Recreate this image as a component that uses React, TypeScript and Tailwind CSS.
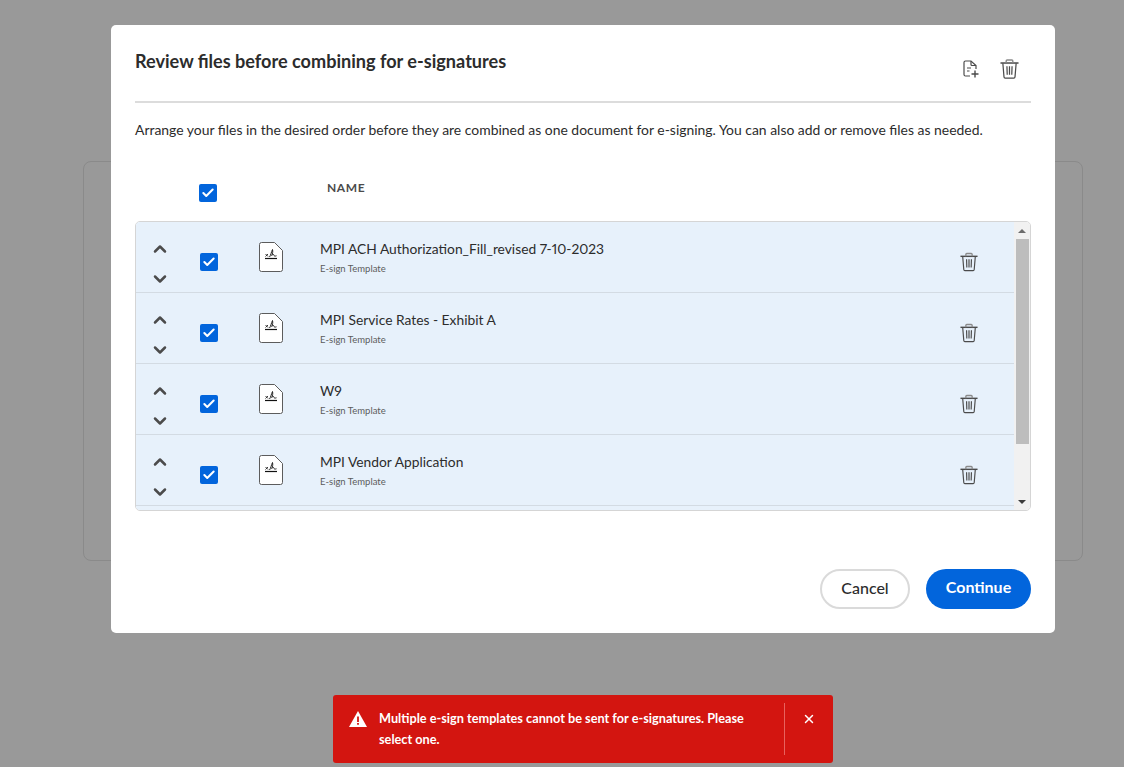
import { ChevronUp, ChevronDown, Check, X } from "lucide-react";

const files = [
  "MPI ACH Authorization_Fill_revised 7-10-2023",
  "MPI Service Rates - Exhibit A",
  "W9",
  "MPI Vendor Application",
];

function CheckBox() {
  return (
    <div className="w-[18px] h-[18px] rounded-[2px] bg-[#0265dc] flex items-center justify-center">
      <Check className="w-[14px] h-[14px] text-white" strokeWidth={3.5} />
    </div>
  );
}

function TrashIcon({ className }: { className?: string }) {
  return (
    <svg viewBox="0 0 20 21" fill="none" stroke="#4b4b4b" strokeWidth="1.3" className={className}>
      <path d="M.5 4.200h19" strokeWidth="1.600" />
      <path d="M6.500 4V2.200c0-.7.400-1.100 1-1.100h5c.6 0 1 .4 1 1.100V4" stroke="#8a8a8a" strokeWidth="1.500" />
      <path d="M3 4.400l1.200 14.400c.1.800.5 1.200 1.200 1.200h9.200c.7 0 1.100-.4 1.200-1.200L17 4.400" />
      <path d="M7.300 7.500l.3 9M10 7.500v9M12.700 7.500l-.3 9" />
    </svg>
  );
}

function FileSignIcon() {
  return (
    <svg viewBox="0 0 24 30" fill="#fff" className="w-[24px] h-[30px]">
      <path d="M2.500.5h13L23.500 8.500V27.500a2 2 0 0 1-2 2H2.500a2 2 0 0 1-2-2V2.500a2 2 0 0 1 2-2z" stroke="#5c5c5c" strokeWidth="1" />
      <path d="M6.500 12l2.500 2.500M9 12l-2.500 2.500" stroke="#222" strokeWidth=".9" fill="none" />
      <path d="M10.500 15c1.200-1.500 1.800-5 3-7.500.6 1.800 0 4.500-.8 6 1-1.200 1.800-1.500 2.300-.5-.2 1 .8 1.400 2.500.8" stroke="#222" strokeWidth="1" fill="none" />
      <path d="M6 16.500h12" stroke="#111" strokeWidth="1.200" />
    </svg>
  );
}

function FilePlusIcon() {
  return (
    <svg viewBox="0 0 16 18" fill="none" stroke="#4b4b4b" strokeWidth="1.200" className="w-[16px] h-[18px] -ml-[1px]">
      <path d="M7 16H2.500C1.700 16 1 15.300 1 14.500v-12C1 1.700 1.700 1 2.500 1H8l5 4.500V9" />
      <path d="M8 1v3.500c0 .6.400 1 1 1h4" />
      <path d="M4 8h4M4 11h2.500" />
      <path d="M12 10.500v7M8.500 14h7" strokeWidth="1.400" />
    </svg>
  );
}

export default function App() {
  return (
    <div className="relative h-[767px] w-full overflow-hidden bg-[#999999] pt-[161px] px-[83px] font-['Lato',sans-serif] proportional-nums">
      <div className="h-[400px] w-[1000px] rounded-lg border border-[#8a8a8a]" />

      {/* modal */}
      <div className="absolute left-[111px] top-[25px] w-[944px] h-[608px] rounded-[5px] bg-white px-6 flex flex-col">
        <div className="flex items-start justify-between h-[78px] border-b-2 border-[#dcdcdc] shrink-0">
          <h1 className="mt-[24px] text-[18.100px] leading-6 font-bold text-[#2c2c2c]">
            Review files before combining for e-signatures
          </h1>
          <div className="flex items-center gap-[21px] mt-[34px] mr-[12px]">
            <FilePlusIcon />
            <TrashIcon className="w-[19px] h-[20px]" />
          </div>
        </div>

        <p className="mt-[17px] text-[13.930px] leading-5 text-[#2c2c2c]">
          Arrange your files in the desired order before they are combined as one document for e-signing. You can also add or remove files as needed.
        </p>

        <div className="flex h-[18px] mt-[44px] pl-[64px] shrink-0">
          <CheckBox />
          <span className="ml-[110px] -mt-[4px] text-[12px] leading-4 font-bold tracking-[.6px] text-[#4b4b4b]">NAME</span>
        </div>

        <div className="mt-[19px] h-[290px] w-[896px] shrink-0 rounded-[5px] border border-[#d5d5d5] flex overflow-hidden">
          <div className="flex-1 bg-[#e7f1fb]">
            {files.map((name) => (
              <div key={name} className="h-[71px] border-b border-[#d3dbe3] flex items-center">
                <div className="w-[48px] mt-[13px] flex flex-col items-center gap-[10px] shrink-0 text-[#4b4b4b]">
                  <ChevronUp className="w-[20px] h-[20px]" strokeWidth={3} />
                  <ChevronDown className="w-[20px] h-[20px]" strokeWidth={3} />
                </div>
                <div className="ml-[16px] mt-[10px]">
                  <CheckBox />
                </div>
                <div className="ml-[41px]">
                  <FileSignIcon />
                </div>
                <div className="ml-[37px] flex-1">
                  <div className="-mt-[1px] text-[13.800px] leading-5 text-[#2c2c2c]">{name}</div>
                  <div className="mt-[4px] text-[9.500px] leading-3 text-[#5c5c5c]">E-sign Template</div>
                </div>
                <TrashIcon className="w-[18px] h-[20px] mt-[10px] mr-[36px]" />
              </div>
            ))}
          </div>
          <div className="w-[16px] bg-[#f1f1f1] flex flex-col items-center shrink-0">
            <div className="h-[17px] flex items-center justify-center">
              <div className="w-0 h-0 border-x-[4px] border-x-transparent border-b-[4px] border-b-[#6b6b6b]" />
            </div>
            <div className="h-[205px] w-[13px] bg-[#bdbdbd]" />
            <div className="flex-1" />
            <div className="h-[17px] flex items-center justify-center">
              <div className="w-0 h-0 border-x-[4px] border-x-transparent border-t-[4px] border-t-[#3c3c3c]" />
            </div>
          </div>
        </div>

        <div className="mt-[58px] flex justify-end gap-4">
          <button className="h-10 w-[90px] pb-[3px] rounded-full border-2 border-[#dadada] bg-white text-[16px] font-medium text-[#2c2c2c]">
            Cancel
          </button>
          <button className="h-10 w-[105px] pb-[4px] rounded-full bg-[#0265dc] text-[16px] font-bold text-white">
            Continue
          </button>
        </div>
      </div>

      {/* toast */}
      <div className="absolute left-[333px] top-[695px] w-[500px] h-[68px] rounded-[3px] bg-[#d31510] flex text-white">
        <svg viewBox="0 0 18 16" className="w-[18px] h-[16px] ml-[16px] mt-[16px] shrink-0">
          <path d="M9 0l9 16H0z" fill="#fff" />
          <path d="M8.100 5.500h1.800v5.500H8.100zM8.100 12h1.800v1.800H8.100z" fill="#d31510" />
        </svg>
        <p className="ml-[12px] mt-[13px] w-[385px] text-[12.720px] leading-[21px] font-bold">
          Multiple e-sign templates cannot be sent for e-signatures. Please select one.
        </p>
        <div className="ml-[20px] my-[8px] w-px bg-[#e8625e]" />
        <div className="flex-1 flex justify-center pt-[17px]">
          <X className="w-[14px] h-[14px]" strokeWidth={2.500} />
        </div>
      </div>
    </div>
  );
}
